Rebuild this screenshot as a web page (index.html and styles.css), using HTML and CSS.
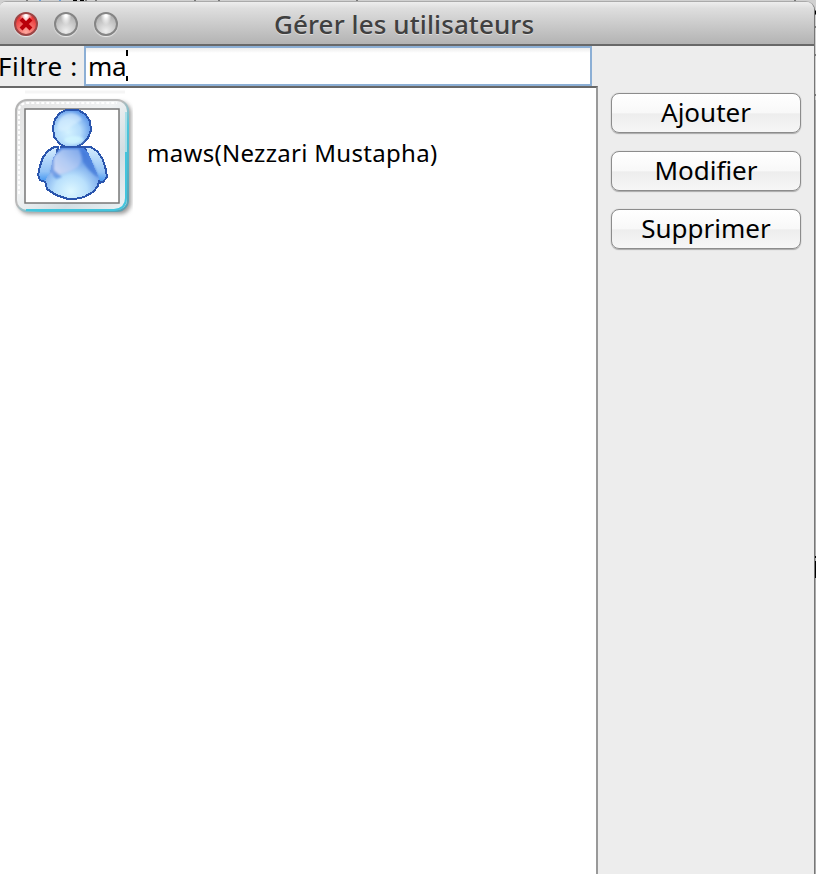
FILE: index.html
```html
<!DOCTYPE html>
<html lang="fr">
<head>
<meta charset="utf-8">
<title>Gérer les utilisateurs</title>
<link rel="stylesheet" href="styles.css">
</head>
<body>
<svg class="desktop" width="816" height="874" viewBox="0 0 816 874" aria-hidden="true">
  <path fill="#d0d0d0" d="M0 0H816V100H0z"/>
  <path fill="#aaa" d="M813 100h3v774h-3z"/>
  <path fill="#777" d="M26 0h2v3h-2zM85 0h2v3h-2zM95 0h2v3h-2zM194 0h2v3h-2zM218 0h2v3h-2zM356 0h2v3h-2zM794 0h2v3h-2zM812 26h4v2h-4zM812 54h4v2h-4zM812 94h4v2h-4z"/>
  <path fill="#6b9fd8" d="M39 0h2v3h-2zM59 0h2v3h-2z"/>
  <path fill="#000" d="M73 0h4v2h-4zM80 0h4v2h-4zM813 8l3 3v4l-3-3zM814 556h2v2h-2zM814 561h2v17h-2z"/>
</svg>
<div class="window">
  <header class="titlebar">
    <div class="lights">
      <span class="light light-close"><svg viewBox="0 0 24 24" width="24" height="24"><path d="M7 7L17 17M17 7L7 17"/></svg></span>
      <span class="light"></span>
      <span class="light"></span>
    </div>
    <h1 class="title">Gérer les utilisateurs</h1>
  </header>
  <main class="content">
    <section class="browser">
      <div class="filter">
        <span class="filter-label">Filtre :</span>
        <div class="filter-input"><span class="filter-text">ma</span><span class="caret"></span></div>
      </div>
      <div class="list">
        <div class="user">
          <svg class="avatar" width="133" height="132" viewBox="0 88 133 132">
            <defs>
              <linearGradient id="frame" x1="0" y1="0" x2="1" y2="1"><stop offset="0" stop-color="#e2e2e2"/><stop offset=".45" stop-color="#f0f2f3"/><stop offset=".7" stop-color="#d3dee3"/><stop offset="1" stop-color="#edf3f5"/></linearGradient>
              <linearGradient id="rim" x1="0" y1="0" x2="1" y2="1"><stop offset="0" stop-color="#b4b4b4"/><stop offset=".48" stop-color="#bbb"/><stop offset=".62" stop-color="#4bc5dc"/><stop offset="1" stop-color="#5a9fb0"/></linearGradient>
              <radialGradient id="head" cx=".4" cy=".6" r=".65"><stop offset="0" stop-color="#d3f2ff"/><stop offset=".5" stop-color="#b5dcfb"/><stop offset="1" stop-color="#5792e8"/></radialGradient>
              <radialGradient id="belly" cx=".48" cy=".85" r=".75"><stop offset="0" stop-color="#ddf7ff"/><stop offset=".4" stop-color="#b9e0fc"/><stop offset="1" stop-color="#4b82e0"/></radialGradient>
              <linearGradient id="arm" x1="0" y1="0" x2="0" y2="1"><stop offset="0" stop-color="#d6edfe"/><stop offset=".7" stop-color="#93c3f6"/><stop offset="1" stop-color="#3e93f0"/></linearGradient>
              <linearGradient id="chest" x1="0" y1="1" x2="1" y2="0"><stop offset="0" stop-color="#d5dcf5"/><stop offset=".5" stop-color="#b2cbf4"/><stop offset="1" stop-color="#7ba5ea"/></linearGradient>
              <filter id="blur" x="-20%" y="-20%" width="140%" height="140%"><feGaussianBlur stdDeviation="2"/></filter>
              <filter id="soft"><feGaussianBlur stdDeviation="1"/></filter>
            </defs>
            <path d="M25 92H125" stroke="#f5f5f5" stroke-width="3"/>
            <rect x="18" y="102" width="113" height="112" rx="11" fill="#999" filter="url(#blur)"/>
            <rect x="16" y="100" width="112" height="111" rx="11" fill="url(#frame)" stroke="url(#rim)" stroke-width="2"/>
            <path d="M19 194V111Q19 103 28 103H117" fill="none" stroke="#fff" stroke-width="2" stroke-dasharray="3 2"/>
            <path d="M26 210H114Q126 209 126 198V152" fill="none" stroke="#43c5dd" stroke-width="2"/>
            <path d="M126 152V112" fill="none" stroke="#a9dfe9" stroke-width="2"/>
            <rect x="25" y="109" width="94" height="94" fill="#fff" stroke="#777" stroke-width="1.5"/>
            <g stroke="#2a55ad" stroke-width="2" stroke-dasharray="none" shape-rendering="crispEdges">
              <path fill="url(#arm)" d="M58 147H54L48 151L43 157L40 166L38 175L40 180L45 182L53 172Z"/>
              <path fill="url(#arm)" d="M85 147H91L98 152L103 160L106 170L107 177L103 182L98 183L91 170Z"/>
              <path fill="url(#belly)" stroke="none" d="M61 147H82L88 152L93 164L99 178L98 186L93 192L84 197L75 199H68L56 195L47 189L45 181L50 172L53 158Z"/>
              <path fill="none" d="M45 181L47 189L56 195L68 199H75L84 197L93 192L98 186L99 180M60 147H84"/>
              <path fill="url(#head)" d="M66 110H78L85 114L90 121L91 130L88 138L82 144L76 147H66L60 144L54 137L53 127L55 119L60 113Z"/>
            </g>
            <g filter="url(#soft)">
              <path fill="url(#chest)" d="M62 149H79Q84 160 78 167Q69 174 51 175Q50 164 55 155Z"/>
              <path fill="#467bd9" d="M82 149Q93 160 99 178Q89 172 83 162Z" opacity=".8"/>
              <path fill="#5389df" d="M54 157L50 172L56 179L62 177L54 170Z" opacity=".7"/>
              <path fill="#e2f3ff" d="M58 124Q60 114 71 113Q80 114 82 120Q73 124 68 130Q62 132 58 130Z" opacity=".5"/>
              <ellipse cx="74" cy="140" rx="10" ry="4" fill="#d4faff" opacity=".7"/>
            </g>
          </svg>
          <span class="user-name">maws(Nezzari Mustapha)</span>
        </div>
      </div>
    </section>
    <nav class="actions">
      <button class="btn">Ajouter</button>
      <button class="btn">Modifier</button>
      <button class="btn">Supprimer</button>
    </nav>
  </main>
</div>
</body>
</html>
```
FILE: styles.css
```css
* { box-sizing: border-box; }
body {
  margin: 0;
  height: 874px;
  overflow: hidden;
  padding-top: 1px;
  font-family: "Noto Sans", "Open Sans", sans-serif;
  font-size: 26px;
  color: #000;
}
.desktop { position: absolute; left: 0; top: 0; z-index: -1; }
.window {
  width: 815px;
  height: 873px;
  display: flex;
  flex-direction: column;
  background: #ededed;
  border-top: 1px solid #aaa;
  border-right: 1px solid #777;
  border-radius: 6px 9px 0 0;
  overflow: hidden;
}
.titlebar {
  height: 44px;
  flex: none;
  display: grid;
  grid-template-columns: 274px 1fr;
  align-items: center;
  background: linear-gradient(#eee, #dedede 15%, #b3b3b3);
  border-bottom: 2px solid #686868;
}
.lights { display: flex; gap: 16px; padding: 2px 0 0 14px; }
.light {
  width: 24px;
  height: 24px;
  border-radius: 50%;
  border: 2px solid #858585;
  background: radial-gradient(ellipse at 50% 0, #fff 0 10%, transparent 40%), radial-gradient(circle at 50% 85%, #eee, #b5b5b5 75%);
  box-shadow: 0 1px 1px #eee;
}
.light-close {
  border-color: #9c4545;
  background: radial-gradient(ellipse at 50% 0, #fff 0 10%, transparent 45%), radial-gradient(circle at 50% 90%, #ffaaa0, #ea3535 75%);
}
.light-close svg { display: block; margin: -2px; fill: none; stroke: #b90008; stroke-width: 4; }
.title {
  margin: 0;
  padding-top: 1px;
  font-size: 26px;
  line-height: 40px;
  font-weight: 500;
  letter-spacing: 0.1px;
  color: #404040;
  text-shadow: 0 1px 0 #ddd;
  white-space: nowrap;
}
.content { flex: 1; display: flex; min-height: 0; }
.browser { width: 598px; display: flex; flex-direction: column; }
.filter { display: flex; height: 40px; line-height: 41px; }
.filter-label {
  width: 84px;
  flex: none;
  margin-left: -2px;
  letter-spacing: 0.6px;
  white-space: nowrap;
}
.filter-input {
  display: flex;
  width: 508px;
  margin-left: 2px;
  padding-left: 2px;
  background: linear-gradient(#ececec, #fff 5px);
  border: 2px solid #8cafd5;
  line-height: 37px;
}
.filter-text { width: 38px; letter-spacing: -0.4px; }
.caret { width: 2px; height: 31px; margin-top: 2px; background: linear-gradient(#000 0 6px, transparent 6px 26px, #000 26px); }
.list { flex: 1; background: #fff; border-top: 2px solid #686868; border-right: 2px solid #999; }
.user { display: flex; height: 132px; }
.avatar { display: block; flex: none; }
.user-name {
  margin-left: 14px;
  line-height: 129px;
  font-size: 24px;
  letter-spacing: 0.3px;
  white-space: nowrap;
}
.actions { display: flex; flex-direction: column; gap: 18px; padding: 47px 0 0 13px; }
.btn {
  width: 190px;
  height: 40px;
  padding: 0 0 2px;
  font: inherit;
  line-height: 36px;
  color: #000;
  border: 1.5px solid #8c8c8c;
  border-radius: 8px;
  background: linear-gradient(#fff, #f8f8f8 50%, #ededed 52%, #f6f6f6);
  box-shadow: 0 1px 1px #aaa, 0 0 1px #aaa;
}
```
